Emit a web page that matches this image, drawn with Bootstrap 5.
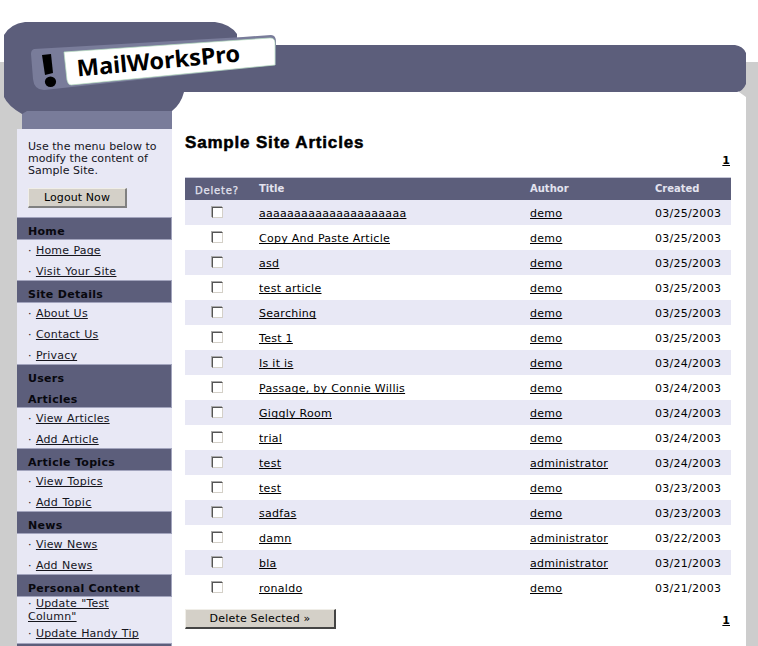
<!DOCTYPE html>
<html lang="en">
<head>
<meta charset="utf-8">
<title>MailWorksPro - Sample Site Articles</title>
<link href="https://cdn.jsdelivr.net/npm/bootstrap@5.3.0/dist/css/bootstrap.min.css" rel="stylesheet">
<style>
body{font:11px/13px "DejaVu Sans",Verdana,sans-serif;color:#000;background:#fff;width:758px;height:646px;overflow:hidden}
a{color:#000;text-decoration:underline;text-underline-offset:1px;text-decoration-thickness:1px;text-decoration-skip-ink:none}
.banner{height:129px}
.banner svg{display:block}
.page-row{height:517px;background:#cdcdcd;padding:0 12px 0 17px}
.side{width:155px;background:#e8e8f5;color:#15151d}
.side a{color:#15151d}
.intro{height:89px;padding:12px 0 0 11px;line-height:12px;letter-spacing:.05px}
.classic{display:block;border:1px solid;border-color:#f0eee8 #808080 #808080 #f0eee8;border-right-width:2px;border-bottom-width:2px;background:#d4d0c8;color:#000;padding:0;border-radius:0}
.logout{width:99px;height:20px;margin-top:11px;line-height:16px;letter-spacing:.1px}
.group{background:#5c5e7b;border:1px solid #a2a4bd;border-left-width:0;margin-top:-1px;font-weight:700;color:#08080e;letter-spacing:.3px}
.group div{height:21px;line-height:28px;padding-left:11px}
.side li{height:21px;line-height:23px;padding-left:11px;letter-spacing:.2px;word-spacing:.5px}
.side li:first-child{height:20px;line-height:22px}
.side li.two:first-child{height:26px;line-height:13px}
.side .wide{letter-spacing:.3px}
.content-area{padding:0 15px 0 13px}
h1{font:700 17px/20px "Liberation Sans",Arial,sans-serif;letter-spacing:.82px;-webkit-text-stroke:.5px #000;padding-top:4px}
.pager{font-weight:700;line-height:13px;padding:1px 1px 0 0}
.grid{table-layout:fixed;width:546px;border-top:1px solid #c7c8d8;border-collapse:separate;border-spacing:0;margin-top:10px;letter-spacing:.28px}
.grid th{height:21px;background:#5c5e7b;color:#e3e3ef;font-size:10px;line-height:20px;padding:0;letter-spacing:0}
.grid th.del{font-weight:400;line-height:18px;padding:4px 0 0 10px;letter-spacing:.8px;-webkit-text-stroke:.25px #e3e3ef}
.grid td{height:25px;padding:1px 0 0;line-height:23px}
.grid tbody tr:nth-child(odd){background:#e8e8f5}
.tick{appearance:none;display:block;width:11px;height:11px;margin:-1px 0 0 27px;background:#fff;border:1px solid #d4d0c8;border-top-color:#555;border-left-color:#555;box-shadow:-1px -1px 0 #aaa}
.below{padding-top:9px}
.below .pager{padding-bottom:2px}
.delsel{width:151px;height:20px;line-height:16px;border-right-color:#444;border-bottom-color:#444;letter-spacing:.2px}
</style>
</head>
<body>
<header class="banner">
<svg width="758" height="129" viewBox="0 0 758 129" role="img" aria-label="MailWorksPro">
<path fill="#cdcdcd" d="M0 62H22V129H0zM740 62H758V129H746V97L739 92z"/>
<path fill="#797c9a" d="M22 105H172V129H22z"/>
<path fill="#5c5e7b" d="M4 35Q10 24 25 22H215Q230 24 237 34V45H735Q743 46 746 53V84Q743 91 737 92H184Q181 104 172 111H27L22 114Q8 106 4 97z"/>
<path fill="#797c9a" d="M34 49L243 37L271 35Q276 35 276 42V65L44 90Q34 90 33 79L31 54Q31 50 34 49z"/>
<path fill="#fff" stroke="#b8dfc1" stroke-width=".7" d="M64 52L270 38Q275 38 275 43V65L71 85Q68 85 67 80z"/>
<path fill="#000" d="M42 55L51 54L53 73L45 75z"/>
<ellipse cx="50.5" cy="81.8" rx="5.6" ry="5.2"/>
<text transform="translate(77.5 76.5) rotate(-5.3)" font-family="Noto Sans,DejaVu Sans,sans-serif" font-weight="700" font-size="23" textLength="164" lengthAdjust="spacingAndGlyphs">MailWorksPro</text>
</svg>
</header>
<div class="d-flex page-row">
<aside class="side flex-shrink-0">
<div class="intro">Use the menu below to<br>modify the content of<br>Sample Site.<button class="classic logout">Logout Now</button></div>
<nav>
<div class="group"><div>Home</div></div>
<ul class="list-unstyled m-0"><li>· <a href="#">Home Page</a></li><li>· <a class="wide" href="#">Visit Your Site</a></li></ul>
<div class="group"><div>Site Details</div></div>
<ul class="list-unstyled m-0"><li>· <a href="#">About Us</a></li><li>· <a href="#">Contact Us</a></li><li>· <a href="#">Privacy</a></li></ul>
<div class="group"><div>Users</div><div>Articles</div></div>
<ul class="list-unstyled m-0"><li>· <a href="#">View Articles</a></li><li>· <a href="#">Add Article</a></li></ul>
<div class="group"><div>Article Topics</div></div>
<ul class="list-unstyled m-0"><li>· <a class="wide" href="#">View Topics</a></li><li>· <a class="wide" href="#">Add Topic</a></li></ul>
<div class="group"><div>News</div></div>
<ul class="list-unstyled m-0"><li>· <a href="#">View News</a></li><li>· <a href="#">Add News</a></li></ul>
<div class="group"><div>Personal Content</div></div>
<ul class="list-unstyled m-0"><li class="two">· <a href="#">Update "Test<br>Column"</a></li><li style="line-height:21px">· <a href="#">Update Handy Tip</a></li></ul>
<div class="group"><div></div></div>
</nav>
</aside>
<main class="content-area flex-grow-1 bg-white">
<h1 class="m-0">Sample Site Articles</h1>
<div class="pager text-end"><a href="#">1</a></div>
<table class="grid">
<colgroup><col width="74"><col width="271"><col width="125"><col></colgroup>
<thead><tr><th class="del">Delete?</th><th>Title</th><th>Author</th><th>Created</th></tr></thead>
<tbody id="rows"></tbody>
</table>
<div class="d-flex justify-content-between align-items-end below"><button class="classic delsel">Delete Selected »</button><span class="pager"><a href="#">1</a></span></div>
</main>
</div>
<script>
const articles = [
["aaaaaaaaaaaaaaaaaaaaa","demo","03/25/2003"],
["Copy And Paste Article","demo","03/25/2003"],
["asd","demo","03/25/2003"],
["test article","demo","03/25/2003"],
["Searching","demo","03/25/2003"],
["Test 1","demo","03/25/2003"],
["Is it is","demo","03/24/2003"],
["Passage, by Connie Willis","demo","03/24/2003"],
["Giggly Room","demo","03/24/2003"],
["trial","demo","03/24/2003"],
["test","administrator","03/24/2003"],
["test","demo","03/23/2003"],
["sadfas","demo","03/23/2003"],
["damn","administrator","03/22/2003"],
["bla","administrator","03/21/2003"],
["ronaldo","demo","03/21/2003"]];
document.getElementById("rows").innerHTML = articles.map(([t,a,d]) =>
`<tr><td><input type="checkbox" class="tick" aria-label="Delete ${t}"></td><td><a href="#">${t}</a></td><td><a href="#">${a}</a></td><td>${d}</td></tr>`).join("");
</script>
<script src="https://cdn.jsdelivr.net/npm/bootstrap@5.3.0/dist/js/bootstrap.bundle.min.js"></script>
</body>
</html>
